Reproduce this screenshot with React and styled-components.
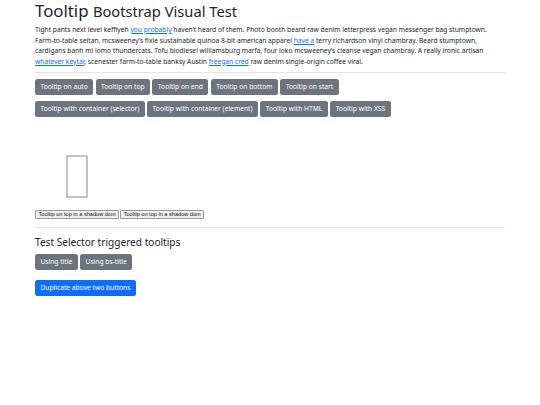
import React from "react";
import styled, { createGlobalStyle } from "styled-components";

const GlobalStyle = createGlobalStyle`
  * { box-sizing: border-box; }
  body {
    margin: 0;
    background: #fff;
    color: #212529;
    font-family: "Noto Sans", "DejaVu Sans", sans-serif;
    font-size: 6.7px;
    line-height: 10.5px;
  }
`;

const Container = styled.div`
  width: 470px;
  margin: 0 auto;
`;

const Title = styled.h1`
  margin: 1px 0 4px;
  font-size: 16.8px;
  line-height: 20px;
  font-weight: 400;

  small {
    font-size: 0.875em;
  }
`;

const Text = styled.p`
  margin: 0 0 5px;
`;

const Link = styled.a`
  color: #0d6efd;
  text-decoration: underline;
`;

const Rule = styled.hr`
  margin: ${(p) => p.$top || 5}px 0 5.5px;
  border: 0;
  border-top: 1px solid #e3e4e5;
`;

const ButtonRow = styled.div`
  margin: 0 0 ${(p) => p.$space || 6.5}px;
  display: flex;
  flex-wrap: wrap;
  gap: 2.5px;
`;

const Button = styled.button`
  height: 16px;
  font-family: inherit;
  font-size: 6.7px;
  line-height: 10px;
  padding: 3px 5.4px;
  border: none;
  border-radius: 2.5px;
  background: ${(p) => (p.$primary ? "#0d6efd" : "#6c757d")};
  color: #fff;
  cursor: pointer;
`;

const TargetRow = styled.div`
  display: flow-root;
  height: 63px;
`;

const Target = styled.div`
  width: 42px;
  height: 21px;
  margin: 42px 0 0 21px;
  border: 1px solid #8a8a8a;
  transform: rotate(270deg);
`;

const Shadow = styled.div`
  padding-top: 23px;
  display: flex;
  gap: 1px;
`;

const NativeButton = styled.button`
  font-family: "Liberation Sans", Arial, sans-serif;
  font-size: 5.6px;
  line-height: 6.2px;
  padding: 0.5px 2.5px;
  border: 0.6px solid #9a9a9a;
  border-radius: 1px;
  background: #efefef;
  color: #111;
`;

const Subtitle = styled.h4`
  margin: 0 0 5.5px;
  padding-top: 3px;
  font-size: 10.1px;
  line-height: 12px;
  font-weight: 400;
`;

const placements = ["auto", "top", "end", "bottom", "start"];
const containers = [
  "Tooltip with container (selector)",
  "Tooltip with container (element)",
  "Tooltip with HTML",
  "Tooltip with XSS",
];

export default function App() {
  return (
    <>
      <GlobalStyle />
      <Container>
        <Title>
          Tooltip <small>Bootstrap Visual Test</small>
        </Title>
        <Text>
          Tight pants next level keffiyeh <Link href="#">you probably</Link> haven’t heard of
          them. Photo booth beard raw denim letterpress vegan messenger bag stumptown.
          Farm-to-table seitan, mcsweeney’s fixie sustainable quinoa 8-bit american apparel{" "}
          <Link href="#">have a</Link> terry richardson vinyl chambray. Beard stumptown,
          cardigans banh mi lomo thundercats. Tofu biodiesel williamsburg marfa, four loko
          mcsweeney’s cleanse vegan chambray. A really ironic artisan{" "}
          <Link href="#">whatever keytar</Link>, scenester farm-to-table banksy Austin{" "}
          <Link href="#">freegan cred</Link> raw denim single-origin coffee viral.
        </Text>
        <Rule />
        <ButtonRow>
          {placements.map((p) => (
            <Button key={p}>Tooltip on {p}</Button>
          ))}
        </ButtonRow>
        <ButtonRow>
          {containers.map((c) => (
            <Button key={c}>{c}</Button>
          ))}
        </ButtonRow>
        <TargetRow>
          <Target />
        </TargetRow>
        <Shadow>
          <NativeButton>Tooltip on top in a shadow dom</NativeButton>
          <NativeButton>Tooltip on top in a shadow dom</NativeButton>
        </Shadow>
        <Rule $top={8} />
        <Subtitle>Test Selector triggered tooltips</Subtitle>
        <ButtonRow $space={10}>
          <Button>Using title</Button>
          <Button>Using bs-title</Button>
        </ButtonRow>
        <ButtonRow>
          <Button $primary>Duplicate above two buttons</Button>
        </ButtonRow>
      </Container>
    </>
  );
}
